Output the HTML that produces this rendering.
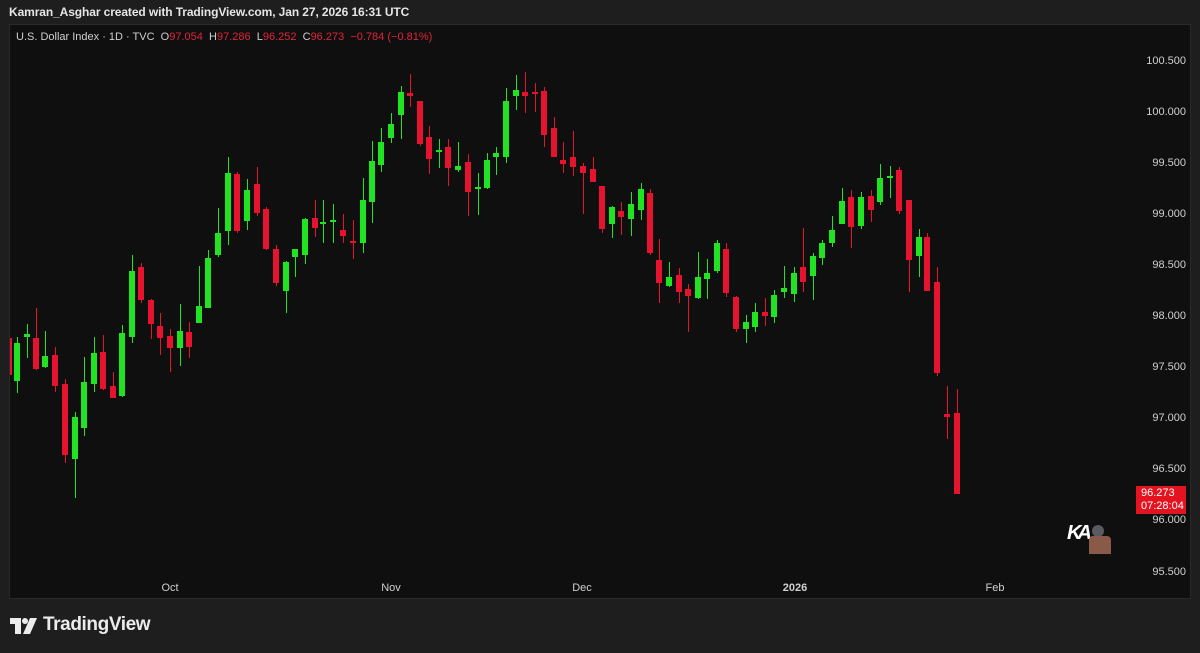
<!DOCTYPE html>
<html><head><meta charset="utf-8"><style>
*{margin:0;padding:0;box-sizing:border-box}
body{width:1200px;height:653px;background:#1e1e1e;position:relative;overflow:hidden;font-family:"Liberation Sans",sans-serif}
.top{position:absolute;left:9px;top:5px;color:#e6e6e6;font-size:12px;font-weight:bold;letter-spacing:-0.1px}
.chart{position:absolute;left:9px;top:24px;width:1182px;height:575px;background:#0f0f0f;border:1px solid #2a2a2a}
.leg{position:absolute;left:16px;top:31px;font-size:11px;color:#cfcfcf;white-space:pre}
.leg b{font-weight:normal;color:#e0253a}
.layer{position:absolute;left:0;top:0;width:1200px;height:653px;clip-path:inset(0 0 0 10px)}
.c{position:absolute;left:calc(var(--x)*1px - 3px);top:calc(var(--wt)*1px);width:6px;height:calc((var(--wb) - var(--wt))*1px)}
.c::before{content:"";position:absolute;left:2.5px;width:1px;top:0;bottom:0;background:currentColor}
.c::after{content:"";position:absolute;left:0;width:6px;top:calc((var(--bt) - var(--wt))*1px);height:max(calc((var(--bb) - var(--bt))*1px),2px);background:currentColor}
.g{color:#22e322}.r{color:#e5132e}
.p{position:absolute;right:14px;font-size:11px;color:#d0d0d0;transform:translateY(-7px)}
.t{position:absolute;top:582px;font-size:11px;color:#d0d0d0;transform:translateX(-50%)}
.lab{position:absolute;left:1136px;top:486px;width:50px;height:28px;background:#e3141f;color:#fff;font-size:11px;line-height:13px;padding:1px 0 0 5px}
.logo{position:absolute;left:43px;top:614px;color:#ececec;font-size:19px;font-weight:bold;letter-spacing:-0.4px}
</style></head><body>
<div class="top">Kamran_Asghar created with TradingView.com, Jan 27, 2026 16:31 UTC</div>
<div class="chart"></div>
<div class="leg">U.S. Dollar Index · 1D · TVC  O<b>97.054</b>  H<b>97.286</b>  L<b>96.252</b>  C<b>96.273</b>  <b>−0.784 (−0.81%)</b></div>
<div class="layer">
<i class="c r" style="--x:9;--wt:335;--wb:378;--bt:338;--bb:375"></i>
<i class="c g" style="--x:17;--wt:337;--wb:393;--bt:343;--bb:381"></i>
<i class="c g" style="--x:27;--wt:324;--wb:358;--bt:334;--bb:337"></i>
<i class="c r" style="--x:36;--wt:308;--wb:370;--bt:338;--bb:369"></i>
<i class="c g" style="--x:45;--wt:331;--wb:368;--bt:356;--bb:367"></i>
<i class="c r" style="--x:55;--wt:347;--wb:392;--bt:355;--bb:386"></i>
<i class="c r" style="--x:65;--wt:379;--wb:463;--bt:384;--bb:455"></i>
<i class="c g" style="--x:75;--wt:412;--wb:498;--bt:417;--bb:459"></i>
<i class="c g" style="--x:84;--wt:357;--wb:436;--bt:382;--bb:428"></i>
<i class="c g" style="--x:94;--wt:337;--wb:392;--bt:353;--bb:384"></i>
<i class="c r" style="--x:103;--wt:335;--wb:390;--bt:352;--bb:389"></i>
<i class="c r" style="--x:113;--wt:372;--wb:398;--bt:386;--bb:398"></i>
<i class="c g" style="--x:122;--wt:325;--wb:397;--bt:333;--bb:396"></i>
<i class="c g" style="--x:132;--wt:255;--wb:343;--bt:271;--bb:337"></i>
<i class="c r" style="--x:141;--wt:263;--wb:303;--bt:267;--bb:300"></i>
<i class="c r" style="--x:151;--wt:299;--wb:339;--bt:300;--bb:324"></i>
<i class="c r" style="--x:160;--wt:313;--wb:355;--bt:326;--bb:338"></i>
<i class="c r" style="--x:170;--wt:329;--wb:372;--bt:336;--bb:348"></i>
<i class="c g" style="--x:180;--wt:304;--wb:366;--bt:331;--bb:348"></i>
<i class="c r" style="--x:189;--wt:322;--wb:358;--bt:332;--bb:347"></i>
<i class="c g" style="--x:199;--wt:266;--wb:323;--bt:306;--bb:323"></i>
<i class="c g" style="--x:208;--wt:250;--wb:308;--bt:258;--bb:308"></i>
<i class="c g" style="--x:218;--wt:208;--wb:257;--bt:233;--bb:255"></i>
<i class="c g" style="--x:228;--wt:157;--wb:245;--bt:173;--bb:231"></i>
<i class="c r" style="--x:237;--wt:172;--wb:233;--bt:174;--bb:231"></i>
<i class="c g" style="--x:247;--wt:179;--wb:230;--bt:190;--bb:221"></i>
<i class="c r" style="--x:257;--wt:167;--wb:216;--bt:184;--bb:213"></i>
<i class="c r" style="--x:266;--wt:207;--wb:250;--bt:209;--bb:249"></i>
<i class="c r" style="--x:276;--wt:245;--wb:286;--bt:249;--bb:283"></i>
<i class="c g" style="--x:286;--wt:261;--wb:313;--bt:262;--bb:291"></i>
<i class="c g" style="--x:295;--wt:249;--wb:277;--bt:249;--bb:257"></i>
<i class="c g" style="--x:305;--wt:218;--wb:264;--bt:219;--bb:255"></i>
<i class="c r" style="--x:315;--wt:200;--wb:237;--bt:218;--bb:228"></i>
<i class="c g" style="--x:323;--wt:200;--wb:243;--bt:222;--bb:224"></i>
<i class="c g" style="--x:333;--wt:204;--wb:243;--bt:220;--bb:222"></i>
<i class="c r" style="--x:343;--wt:214;--wb:243;--bt:230;--bb:236"></i>
<i class="c r" style="--x:353;--wt:220;--wb:259;--bt:241;--bb:243"></i>
<i class="c g" style="--x:363;--wt:178;--wb:253;--bt:200;--bb:243"></i>
<i class="c g" style="--x:372;--wt:141;--wb:223;--bt:161;--bb:202"></i>
<i class="c g" style="--x:381;--wt:128;--wb:172;--bt:142;--bb:165"></i>
<i class="c g" style="--x:391;--wt:113;--wb:143;--bt:124;--bb:138"></i>
<i class="c g" style="--x:401;--wt:86;--wb:139;--bt:92;--bb:115"></i>
<i class="c r" style="--x:410;--wt:74;--wb:107;--bt:93;--bb:96"></i>
<i class="c r" style="--x:420;--wt:101;--wb:146;--bt:101;--bb:144"></i>
<i class="c r" style="--x:429;--wt:126;--wb:174;--bt:137;--bb:159"></i>
<i class="c g" style="--x:439;--wt:139;--wb:168;--bt:150;--bb:152"></i>
<i class="c r" style="--x:448;--wt:139;--wb:186;--bt:147;--bb:168"></i>
<i class="c g" style="--x:458;--wt:142;--wb:172;--bt:166;--bb:170"></i>
<i class="c r" style="--x:468;--wt:154;--wb:216;--bt:162;--bb:192"></i>
<i class="c g" style="--x:478;--wt:173;--wb:215;--bt:187;--bb:189"></i>
<i class="c g" style="--x:487;--wt:153;--wb:189;--bt:160;--bb:188"></i>
<i class="c g" style="--x:496;--wt:147;--wb:175;--bt:153;--bb:157"></i>
<i class="c g" style="--x:506;--wt:88;--wb:163;--bt:101;--bb:157"></i>
<i class="c g" style="--x:516;--wt:75;--wb:110;--bt:90;--bb:96"></i>
<i class="c r" style="--x:525;--wt:72;--wb:113;--bt:92;--bb:96"></i>
<i class="c r" style="--x:535;--wt:83;--wb:112;--bt:92;--bb:94"></i>
<i class="c r" style="--x:544;--wt:87;--wb:147;--bt:91;--bb:135"></i>
<i class="c r" style="--x:554;--wt:117;--wb:157;--bt:128;--bb:157"></i>
<i class="c r" style="--x:563;--wt:142;--wb:173;--bt:160;--bb:164"></i>
<i class="c r" style="--x:573;--wt:131;--wb:176;--bt:157;--bb:167"></i>
<i class="c r" style="--x:583;--wt:163;--wb:214;--bt:166;--bb:173"></i>
<i class="c r" style="--x:593;--wt:157;--wb:182;--bt:169;--bb:182"></i>
<i class="c r" style="--x:602;--wt:186;--wb:233;--bt:186;--bb:229"></i>
<i class="c g" style="--x:612;--wt:206;--wb:238;--bt:207;--bb:224"></i>
<i class="c r" style="--x:621;--wt:202;--wb:235;--bt:211;--bb:217"></i>
<i class="c g" style="--x:631;--wt:192;--wb:236;--bt:204;--bb:219"></i>
<i class="c g" style="--x:641;--wt:183;--wb:220;--bt:189;--bb:210"></i>
<i class="c r" style="--x:650;--wt:189;--wb:255;--bt:193;--bb:253"></i>
<i class="c r" style="--x:659;--wt:239;--wb:303;--bt:260;--bb:283"></i>
<i class="c g" style="--x:669;--wt:262;--wb:287;--bt:277;--bb:286"></i>
<i class="c r" style="--x:679;--wt:268;--wb:303;--bt:275;--bb:292"></i>
<i class="c r" style="--x:688;--wt:284;--wb:332;--bt:289;--bb:296"></i>
<i class="c g" style="--x:698;--wt:252;--wb:299;--bt:277;--bb:298"></i>
<i class="c g" style="--x:707;--wt:259;--wb:299;--bt:273;--bb:279"></i>
<i class="c g" style="--x:717;--wt:240;--wb:273;--bt:243;--bb:271"></i>
<i class="c r" style="--x:726;--wt:243;--wb:297;--bt:249;--bb:293"></i>
<i class="c r" style="--x:736;--wt:296;--wb:332;--bt:297;--bb:329"></i>
<i class="c g" style="--x:746;--wt:315;--wb:343;--bt:322;--bb:329"></i>
<i class="c g" style="--x:755;--wt:303;--wb:332;--bt:312;--bb:327"></i>
<i class="c r" style="--x:765;--wt:298;--wb:326;--bt:312;--bb:316"></i>
<i class="c g" style="--x:774;--wt:290;--wb:323;--bt:295;--bb:317"></i>
<i class="c g" style="--x:784;--wt:266;--wb:298;--bt:288;--bb:292"></i>
<i class="c g" style="--x:794;--wt:267;--wb:302;--bt:273;--bb:294"></i>
<i class="c r" style="--x:803;--wt:228;--wb:292;--bt:267;--bb:282"></i>
<i class="c g" style="--x:813;--wt:253;--wb:300;--bt:256;--bb:276"></i>
<i class="c g" style="--x:822;--wt:240;--wb:265;--bt:243;--bb:258"></i>
<i class="c g" style="--x:832;--wt:216;--wb:247;--bt:230;--bb:243"></i>
<i class="c g" style="--x:842;--wt:188;--wb:224;--bt:201;--bb:224"></i>
<i class="c r" style="--x:851;--wt:190;--wb:248;--bt:197;--bb:227"></i>
<i class="c g" style="--x:861;--wt:192;--wb:229;--bt:197;--bb:226"></i>
<i class="c r" style="--x:871;--wt:190;--wb:222;--bt:196;--bb:210"></i>
<i class="c g" style="--x:880;--wt:164;--wb:205;--bt:178;--bb:202"></i>
<i class="c g" style="--x:890;--wt:166;--wb:198;--bt:176;--bb:177"></i>
<i class="c r" style="--x:899;--wt:167;--wb:214;--bt:170;--bb:211"></i>
<i class="c r" style="--x:909;--wt:200;--wb:292;--bt:200;--bb:260"></i>
<i class="c g" style="--x:919;--wt:229;--wb:277;--bt:237;--bb:256"></i>
<i class="c r" style="--x:927;--wt:233;--wb:291;--bt:237;--bb:291"></i>
<i class="c r" style="--x:937;--wt:267;--wb:376;--bt:282;--bb:373"></i>
<i class="c r" style="--x:947;--wt:386;--wb:439;--bt:414;--bb:417"></i>
<i class="c r" style="--x:957;--wt:389;--wb:494;--bt:413;--bb:494"></i>
</div>
<div class="p" style="top:62px">100.500</div>
<div class="p" style="top:113px">100.000</div>
<div class="p" style="top:164px">99.500</div>
<div class="p" style="top:215px">99.000</div>
<div class="p" style="top:266px">98.500</div>
<div class="p" style="top:317px">98.000</div>
<div class="p" style="top:368px">97.500</div>
<div class="p" style="top:419px">97.000</div>
<div class="p" style="top:470px">96.500</div>
<div class="p" style="top:521px">96.000</div>
<div class="p" style="top:573px">95.500</div>
<div class="lab">96.273<br>07:28:04</div>
<div class="t" style="left:170px">Oct</div>
<div class="t" style="left:391px">Nov</div>
<div class="t" style="left:582px">Dec</div>
<div class="t" style="left:795px;font-weight:bold">2026</div>
<div class="t" style="left:995px">Feb</div>
<div style="position:absolute;left:1067px;top:520px;width:50px;height:38px">
<div style="position:absolute;left:0;top:2px;color:#fff;font-size:20px;font-weight:bold;font-style:italic;letter-spacing:-4px">KA</div>
<div style="position:absolute;left:25px;top:5px;width:12px;height:12px;border-radius:50%;background:#5a5a62"></div>
<div style="position:absolute;left:22px;top:16px;width:22px;height:18px;background:#8a5a48;border-radius:4px 4px 0 0"></div>
</div>
<svg style="position:absolute;left:10px;top:618px" width="28" height="17" viewBox="0 0 28 17">
<path d="M0 0H11V16H5V6H0Z" fill="#ececec"/>
<circle cx="15" cy="3" r="3" fill="#ececec"/>
<path d="M20 0H27L20 16H13Z" fill="#ececec"/>
</svg>
<div class="logo">TradingView</div>
</body></html>
